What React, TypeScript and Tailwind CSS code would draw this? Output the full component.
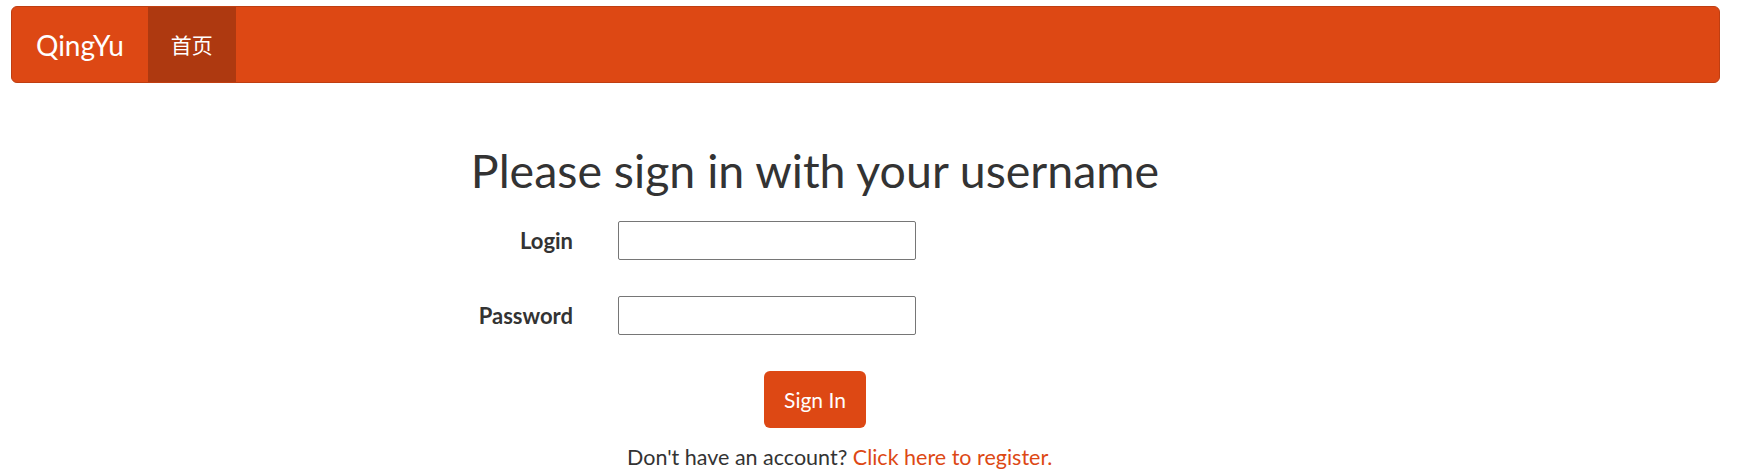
import React from "react";

export default function App() {
  return (
    <div className="min-h-[471px] bg-white text-[#333333]" style={{ fontFamily: "Lato, 'Noto Sans CJK SC', sans-serif" }}>
      <div className="pt-[6px] pl-[11px] pr-[18px]">
        <nav className="flex h-[77px] items-stretch rounded-[6px] border border-[#bf3e11] bg-[#dd4814]">
          <a className="flex items-center px-[24px] text-[28px] text-white">QingYu</a>
          <a className="flex items-center bg-[#ae3910] px-[23px] text-[21px] text-white" style={{ fontFamily: "'Noto Sans CJK SC', sans-serif" }}>首页</a>
        </nav>
      </div>
      <div className="ml-[465px] w-[700px]">
        <h2 className="mt-[62px] text-center text-[46.5px] leading-[50px]">Please sign in with your username</h2>
        <form className="mt-[26px] flex flex-col gap-[36px]">
          <div className="flex items-center">
            <label className="w-[108px] text-right text-[22px] font-bold">Login</label>
            <input className="ml-[45px] h-[39px] w-[298px] rounded-[2px] border border-[#767676] bg-white" />
          </div>
          <div className="flex items-center">
            <label className="w-[108px] text-right text-[22px] font-bold">Password</label>
            <input type="password" className="ml-[45px] h-[39px] w-[298px] rounded-[2px] border border-[#767676] bg-white" />
          </div>
        </form>
        <div className="mt-[36px] flex justify-center">
          <button className="h-[57px] w-[102px] rounded-[6px] bg-[#dd4814] text-[21px] text-white">Sign In</button>
        </div>
        <p className="mt-[14px] pl-[162px] text-[21.5px] leading-[30px]">
          Don't have an account? <a className="text-[#dd4814]">Click here to register.</a>
        </p>
      </div>
    </div>
  );
}
